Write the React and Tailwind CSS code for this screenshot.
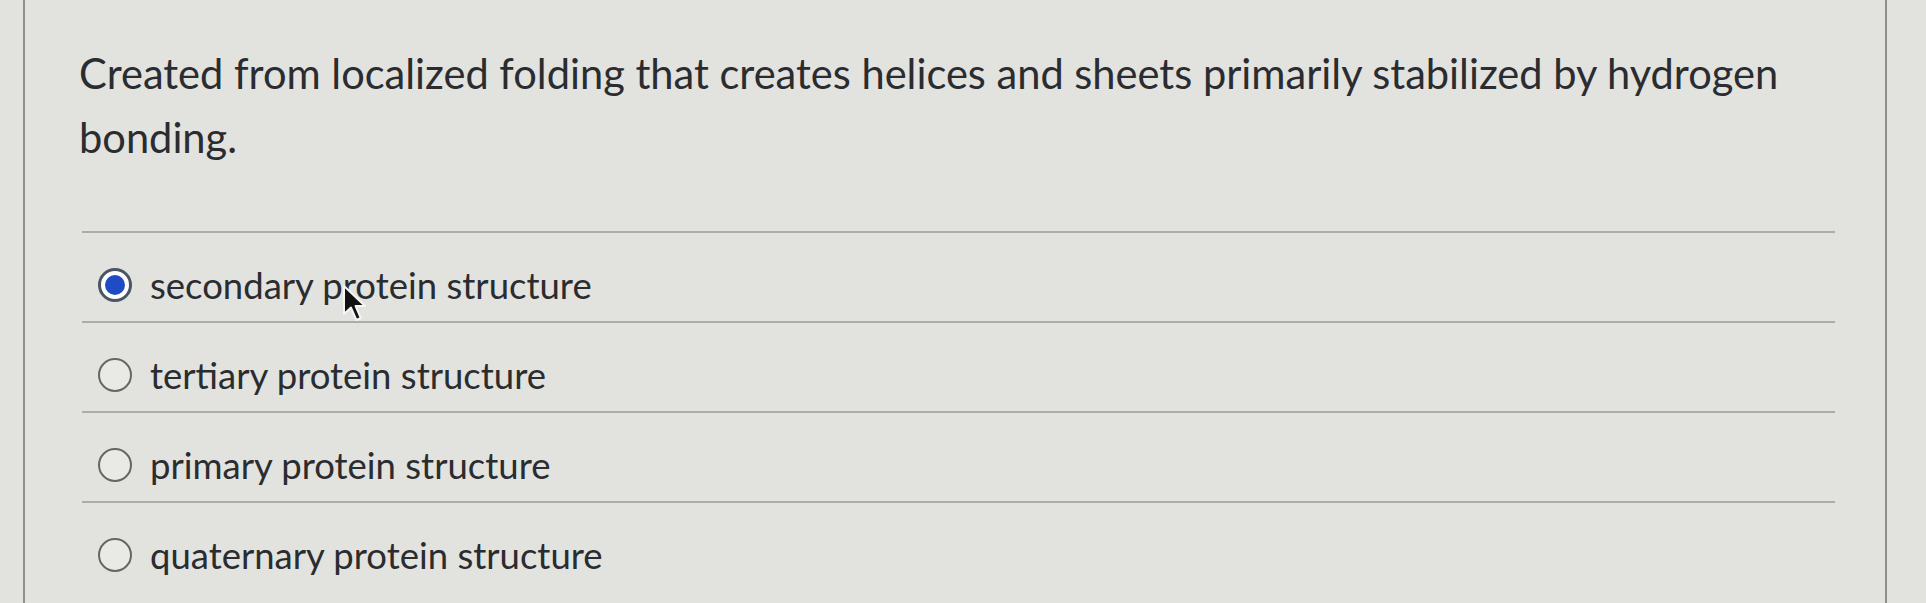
const options = [
  { id: "secondary", label: "secondary protein structure", checked: true },
  { id: "tertiary", label: "tertiary protein structure" },
  { id: "primary", label: "primary protein structure" },
  { id: "quaternary", label: "quaternary protein structure" },
];

function Radio({ checked }) {
  if (checked) {
    return (
      <span className="flex h-[34px] w-[34px] shrink-0 items-center justify-center rounded-full border-[3px] border-[#4b5563] bg-white">
        <span className="h-[20px] w-[20px] rounded-full bg-[#1f4bc4]" />
      </span>
    );
  }
  return (
    <span className="h-[34px] w-[34px] shrink-0 rounded-full border-2 border-[#666664] bg-[#e9e9e6]" />
  );
}

function Cursor() {
  return (
    <svg
      className="pointer-events-none absolute left-[342px] top-[284px]"
      width="26"
      height="40"
      viewBox="0 0 13 20"
    >
      <path
        d="M1 1 L1 15 L4.5 11.8 L7.2 18 L9.4 17 L6.8 11 L11.5 11 Z"
        fill="#111"
        stroke="#f5f5f5"
        strokeWidth="1"
        strokeLinejoin="round"
      />
    </svg>
  );
}

export default function App() {
  return (
    <div
      className="relative h-[603px] w-full overflow-hidden bg-[#e2e2df] pl-[23px] pr-[39px]"
      style={{ fontFamily: "Lato, 'Open Sans', sans-serif" }}
    >
      <div className="h-full border-x-2 border-[#8e8e8b]">
        <p className="pl-[54px] pr-[60px] pt-[41px] text-[41.6px] leading-[64px] text-[#2a2c2f]">
          Created from localized folding that creates helices and sheets primarily stabilized by
          hydrogen bonding.
        </p>

        <div className="ml-[57px] mr-[50px] mt-[62px]">
          {options.map((opt) => (
            <div
              key={opt.id}
              className="flex items-center gap-[18px] border-t-2 border-[#acacaa] pb-[15px] pl-[16px] pt-[31px]"
            >
              <Radio checked={opt.checked} />
              <span className="text-[36.5px] leading-[42px] text-[#2a2c2f]">{opt.label}</span>
            </div>
          ))}
        </div>
      </div>
      <Cursor />
    </div>
  );
}
